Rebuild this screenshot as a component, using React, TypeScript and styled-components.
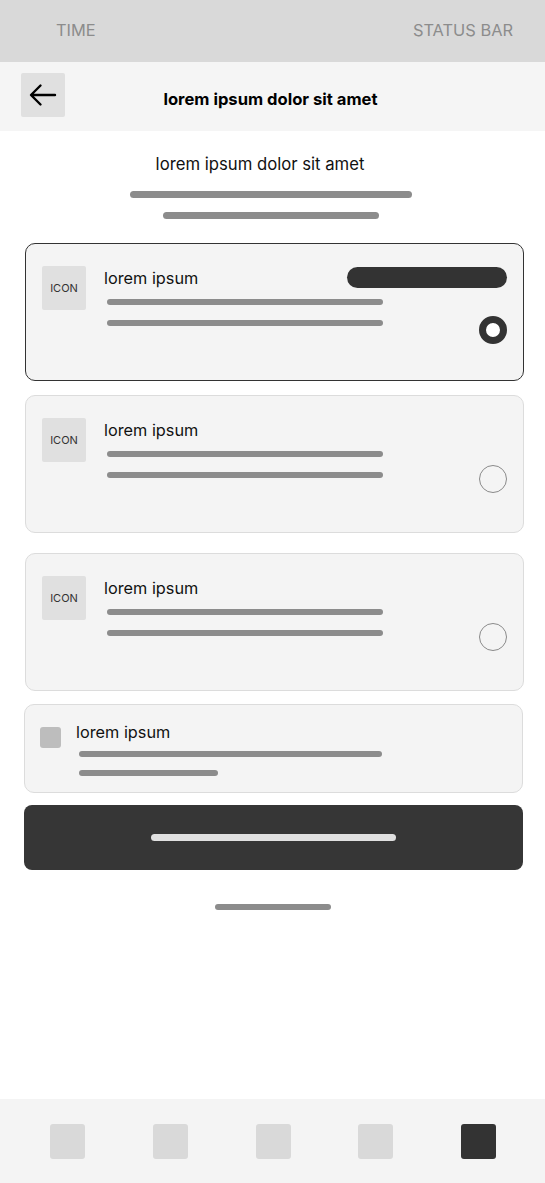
import styled, { createGlobalStyle } from "styled-components";

const GlobalStyle = createGlobalStyle`
  * { box-sizing: border-box; }
  body {
    margin: 0;
    background: #ffffff;
    font-family: Inter, "Noto Sans", sans-serif;
    color: #111;
  }
`;

const Screen = styled.div`
  width: 545px;
  min-height: 100vh;
  display: flex;
  flex-direction: column;
  background: #ffffff;
`;

const StatusBar = styled.div`
  height: 62px;
  background: #d9d9d9;
  display: flex;
  justify-content: space-between;
  align-items: center;
  padding: 0 32px 2px 56px;
  font-size: 16.4px;
  color: #8c8c8c;
`;

const Header = styled.header`
  height: 69px;
  background: #f5f5f5;
  display: flex;
  align-items: flex-start;
  padding: 11px 21px 0;
`;

const BackButton = styled.button`
  width: 44px;
  height: 44px;
  border: none;
  border-radius: 2px;
  background: #e0e0e0;
  display: flex;
  align-items: center;
  justify-content: center;
  padding: 0;
  cursor: pointer;
`;

const HeaderTitle = styled.h1`
  flex: 1;
  margin: 14px 48px 0 0;
  text-align: center;
  font-size: 16.6px;
  line-height: 24px;
  font-weight: 700;
  color: #000;
`;

const Main = styled.main`
  flex: 1;
  display: flex;
  flex-direction: column;
  padding: 0 22px 0 24px;
`;

const Intro = styled.section`
  display: flex;
  flex-direction: column;
  align-items: center;
  padding: 21px 5px 0 0;
`;

const Subtitle = styled.p`
  margin: 0 22px 0 0;
  font-size: 16.7px;
  line-height: 24px;
  color: #111;
`;

const Bar = styled.div<{ $w: number; $h?: number; $mt: number; $color?: string }>`
  width: ${(p) => p.$w}px;
  height: ${(p) => p.$h ?? 6}px;
  margin-top: ${(p) => p.$mt}px;
  border-radius: 4px;
  background: ${(p) => p.$color ?? "#8c8c8c"};
`;

const OptionCard = styled.div<{ $selected?: boolean; $mt: number }>`
  height: 138px;
  margin: ${(p) => p.$mt}px -1px 0 1px;
  padding: 22px 16px 0 16px;
  border: 1px solid ${(p) => (p.$selected ? "#333333" : "#dcdcdc")};
  border-radius: 10px;
  background: #f4f4f4;
  display: flex;
  gap: 18px;
`;

const IconBox = styled.div`
  width: 44px;
  height: 44px;
  flex-shrink: 0;
  border-radius: 2px;
  background: #e0e0e0;
  display: flex;
  align-items: center;
  justify-content: center;
  font-size: 11px;
  color: #333;
`;

const OptionBody = styled.div`
  flex: 1;
  min-width: 0;
  display: grid;
  grid-template-columns: 1fr 28px;
  grid-template-rows: auto auto;
  grid-template-areas:
    "head head"
    "lines radio";
  align-content: start;
`;

const HeadRow = styled.div`
  grid-area: head;
  display: flex;
  justify-content: space-between;
  align-items: flex-start;
`;

const LineStack = styled.div`
  grid-area: lines;
  display: flex;
  flex-direction: column;
  padding-top: 3px;
`;

const CardBody = styled.div`
  flex: 1;
  display: flex;
  flex-direction: column;
  align-items: flex-start;
`;

const CardTitle = styled.div`
  font-size: 16.3px;
  line-height: 24px;
  color: #111;
`;

const CardLine = styled(Bar)`
  margin-left: 3px;
`;

const Pill = styled.div`
  width: 160px;
  height: 21px;
  margin-top: 1px;
  border-radius: 11px;
  background: #333333;
`;

const Radio = styled.div<{ $checked?: boolean }>`
  grid-area: radio;
  width: 28px;
  height: 28px;
  margin-top: ${(p) => (p.$checked ? 26 : 23)}px;
  border-radius: 50%;
  background: ${(p) => (p.$checked ? "#ffffff" : "transparent")};
  border: ${(p) => (p.$checked ? "7px solid #333333" : "1.5px solid #8a8a8a")};
`;

const CheckCard = styled.div`
  height: 89px;
  margin-top: 13px;
  padding: 15px 15px 0;
  border: 1px solid #dcdcdc;
  border-radius: 10px;
  background: #f4f4f4;
  display: flex;
  gap: 15px;
`;

const CheckBox = styled.div`
  width: 21px;
  height: 21px;
  margin-top: 7px;
  flex-shrink: 0;
  border-radius: 3px;
  background: #bdbdbd;
`;

const PrimaryButton = styled.button`
  height: 65px;
  margin-top: 12px;
  border: none;
  border-radius: 8px;
  background: #363636;
  display: flex;
  align-items: center;
  justify-content: center;
  padding: 0;
  cursor: pointer;
`;

const HomeIndicator = styled.div`
  align-self: center;
  width: 116px;
  height: 6px;
  margin: 34px 0 0 -2px;
  border-radius: 3px;
  background: #8c8c8c;
`;

const TabBar = styled.nav`
  height: 84px;
  background: #f4f4f4;
  display: flex;
  justify-content: space-between;
  padding: 25px 49px 0 50px;
`;

const TabItem = styled.div<{ $active?: boolean }>`
  width: 35px;
  height: 35px;
  border-radius: 3px;
  background: ${(p) => (p.$active ? "#333333" : "#d9d9d9")};
`;

const options = [
  { selected: true, gap: 24 },
  { selected: false, gap: 14 },
  { selected: false, gap: 20 },
];

const ArrowLeft = () => (
  <svg width="28" height="24" viewBox="0 0 28 24" fill="none">
    <path
      d="M26 12H2.5M11.5 2.5L2 12l9.5 9.5"
      stroke="#000"
      strokeWidth="2.4"
      strokeLinecap="round"
      strokeLinejoin="round"
    />
  </svg>
);

export default function App() {
  return (
    <Screen>
      <GlobalStyle />
      <StatusBar>
        <span>TIME</span>
        <span>STATUS BAR</span>
      </StatusBar>
      <Header>
        <BackButton aria-label="back">
          <ArrowLeft />
        </BackButton>
        <HeaderTitle>lorem ipsum dolor sit amet</HeaderTitle>
      </Header>
      <Main>
        <Intro>
          <Subtitle>lorem ipsum dolor sit amet</Subtitle>
          <Bar $w={282} $h={7} $mt={15} />
          <Bar $w={216} $h={7} $mt={14} />
        </Intro>

        {options.map((o, i) => (
          <OptionCard key={i} $selected={o.selected} $mt={o.gap}>
            <IconBox>ICON</IconBox>
            <OptionBody>
              <HeadRow>
                <CardTitle>lorem ipsum</CardTitle>
                {o.selected && <Pill />}
              </HeadRow>
              <LineStack>
                <CardLine $w={276} $mt={6} />
                <CardLine $w={276} $mt={15} />
              </LineStack>
              <Radio $checked={o.selected} />
            </OptionBody>
          </OptionCard>
        ))}

        <CheckCard>
          <CheckBox />
          <CardBody>
            <CardTitle>lorem ipsum</CardTitle>
            <CardLine $w={303} $mt={7} />
            <CardLine $w={139} $mt={13} />
          </CardBody>
        </CheckCard>

        <PrimaryButton>
          <Bar $w={245} $h={7} $mt={0} $color="#e0e0e0" />
        </PrimaryButton>

        <HomeIndicator />
      </Main>
      <TabBar>
        <TabItem />
        <TabItem />
        <TabItem />
        <TabItem />
        <TabItem $active />
      </TabBar>
    </Screen>
  );
}
